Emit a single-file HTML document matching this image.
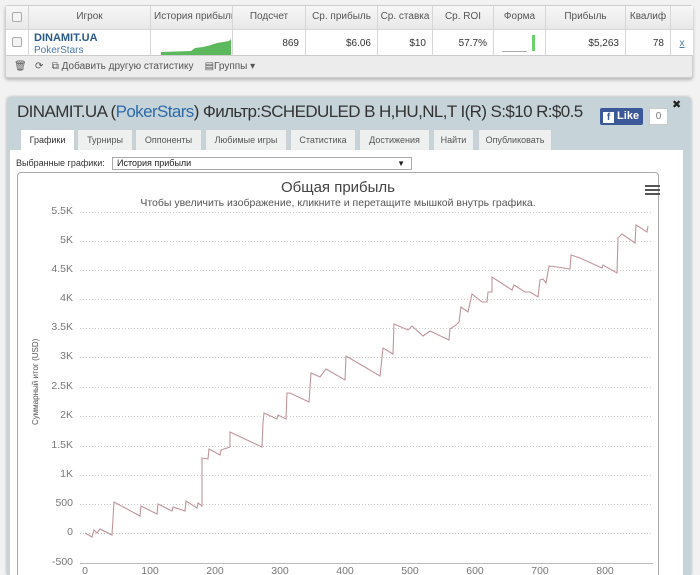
<!DOCTYPE html>
<html><head><meta charset="utf-8"><style>
*{margin:0;padding:0;box-sizing:border-box}
html,body{width:700px;height:575px;overflow:hidden}
body{background:#f2f2f2;position:relative;font-family:"Liberation Sans","DejaVu Sans",sans-serif;color:#333}
.abs{position:absolute}
.top{left:5px;top:5px;width:688px;height:73px;background:#ececec;border:1px solid #cfcfcf;border-radius:3px;box-shadow:0 2px 3px rgba(0,0,0,.25)}
.hc{position:absolute;top:0;height:23px;line-height:22px;font-size:10px;color:#555;text-align:center;border-right:1px solid #d6d6d6;background:linear-gradient(#f7f7f7,#e8e8e8);white-space:nowrap;overflow:hidden}
.dc{position:absolute;top:23px;height:27px;line-height:27px;font-size:10px;color:#333;text-align:right;padding-right:6px;border-right:1px solid #d6d6d6;background:#fff;border-top:1px solid #d6d6d6;border-bottom:1px solid #ccc}
.cb{position:absolute;width:10px;height:10px;border:1px solid #aaa;background:#f4f4f4;border-radius:2px}
.tab{position:absolute;top:129px;height:21px;line-height:20px;font-size:9px;color:#555;text-align:center;background:#eef0f0;border:1px solid #c9cfd2;border-bottom:none}
.yl{position:absolute;left:40px;width:33px;text-align:right;font-size:10.5px;color:#777}
.xl{position:absolute;top:565px;font-size:10.5px;color:#777;width:30px;text-align:center}
</style></head><body>
<div class="abs top">
 <div class="hc" style="left:0;width:23px"></div>
 <div class="hc" style="left:23px;width:122px">Игрок</div>
 <div class="hc" style="left:145px;width:82px;text-align:left;padding-left:3px">История прибыли</div>
 <div class="hc" style="left:227px;width:73px">Подсчет</div>
 <div class="hc" style="left:300px;width:72px">Ср. прибыль</div>
 <div class="hc" style="left:372px;width:55px">Ср. ставка</div>
 <div class="hc" style="left:427px;width:61px">Ср. ROI</div>
 <div class="hc" style="left:488px;width:52px">Форма</div>
 <div class="hc" style="left:540px;width:80px">Прибыль</div>
 <div class="hc" style="left:620px;width:45px">Квалиф</div>
 <div class="hc" style="left:665px;width:22px;border:none"></div>
 <div class="cb" style="left:6px;top:6px"></div>
 <div class="dc" style="left:0;width:23px"></div>
 <div class="dc" style="left:23px;width:122px;text-align:left;padding-left:5px;line-height:12px;padding-top:2px"><b style="color:#2a5a8c;font-size:11px">DINAMIT.UA</b><br><span style="color:#4a78a8">PokerStars</span></div>
 <div class="dc" style="left:145px;width:82px"><svg width="82" height="27" style="position:absolute;left:0;top:0"><polygon points="10,22 40,21 44,18 52,17 60,15 66,13 72,12 78,11 80,9 80,25 10,25" fill="#5cb85c"/></svg></div>
 <div class="dc" style="left:227px;width:73px">869</div>
 <div class="dc" style="left:300px;width:72px">$6.06</div>
 <div class="dc" style="left:372px;width:55px">$10</div>
 <div class="dc" style="left:427px;width:61px">57.7%</div>
 <div class="dc" style="left:488px;width:52px"><div class="abs" style="left:38px;top:5px;width:3px;height:16px;background:#6cd06c"></div><div class="abs" style="left:8px;top:21px;width:25px;height:1px;background:#aaa"></div></div>
 <div class="dc" style="left:540px;width:80px">$5,263</div>
 <div class="dc" style="left:620px;width:45px">78</div>
 <div class="dc" style="left:665px;width:22px;border-right:none;text-align:center;padding:0;color:#4a78a8;text-decoration:underline">x</div>
 <div class="cb" style="left:6px;top:31px"></div>
 <div class="abs" style="left:8px;top:55px;font-size:10px;color:#555;white-space:nowrap">🗑&nbsp;&nbsp;&nbsp;⟳&nbsp;&nbsp;&nbsp;⧉ Добавить другую статистику&nbsp;&nbsp;&nbsp;&nbsp;▤Группы ▾</div>
</div>

<div class="abs" style="left:7px;top:97px;width:684px;height:478px;background:#c6d4da;border-radius:4px 4px 0 0;box-shadow:0 0 3px rgba(0,0,0,.3)"></div>
<div class="abs" style="left:17px;top:102px;font-size:17px;color:#333;white-space:nowrap;letter-spacing:-0.6px">DINAMIT.UA (<span style="color:#2d6aa8">PokerStars</span>) Фильтр:SCHEDULED B H,HU,NL,T I(R) S:$10 R:$0.5</div>
<div class="abs" style="left:600px;top:108px;width:43px;height:17px;background:#3b5998;border-radius:2px;color:#fff;font-size:11px;font-weight:bold;line-height:17px;padding-left:3px"><span style="display:inline-block;width:11px;height:11px;background:#fff;color:#3b5998;font-size:10px;line-height:12px;text-align:center;vertical-align:-1px">f</span> Like</div>
<div class="abs" style="left:649px;top:108px;width:19px;height:17px;background:#fff;border:1px solid #ccc;font-size:10px;color:#777;text-align:center;line-height:15px">0</div>
<div class="abs" style="left:672px;top:98px;font-size:11px;font-weight:bold;color:#222">✖</div>

<div class="abs" style="left:10px;top:150px;width:673px;height:425px;background:#fff"></div>
<div class="tab" style="left:20px;width:55px;background:#fff;color:#333">Графики</div>
<div class="tab" style="left:77px;width:56px">Турниры</div>
<div class="tab" style="left:135px;width:67px">Оппоненты</div>
<div class="tab" style="left:205px;width:82px">Любимые игры</div>
<div class="tab" style="left:290px;width:66px">Статистика</div>
<div class="tab" style="left:359px;width:71px">Достижения</div>
<div class="tab" style="left:433px;width:41px">Найти</div>
<div class="tab" style="left:478px;width:74px">Опубликовать</div>

<div class="abs" style="left:16px;top:158px;font-size:9px;color:#333">Выбранные графики:</div>
<div class="abs" style="left:112px;top:157px;width:300px;height:13px;border:1px solid #aaa;font-size:9px;line-height:11px;padding-left:4px;color:#222">История прибыли<span style="position:absolute;right:6px;font-size:8px">▼</span></div>

<div class="abs" style="left:17px;top:172px;width:642px;height:410px;border:1px solid #aaa;border-radius:4px;background:#fff"></div>
<div class="abs" style="left:17px;top:179px;width:642px;text-align:center;font-size:15px;color:#444">Общая прибыль</div>
<div class="abs" style="left:17px;top:197px;width:642px;text-align:center;font-size:10.5px;color:#555">Чтобы увеличить изображение, кликните и перетащите мышкой внутрь графика.</div>
<div class="abs" style="left:645px;top:185px;width:15px"><div style="height:2px;background:#555;margin-bottom:2px"></div><div style="height:2px;background:#555;margin-bottom:2px"></div><div style="height:2px;background:#555"></div></div>
<div class="abs" style="transform:rotate(-90deg);transform-origin:0 0;font-size:8px;color:#555;white-space:nowrap;left:31px;top:425px">Суммарный итог (USD)</div>

<div class="yl" style="top:205px">5.5K</div>
<div class="yl" style="top:234px">5K</div>
<div class="yl" style="top:263px">4.5K</div>
<div class="yl" style="top:292px">4K</div>
<div class="yl" style="top:321px">3.5K</div>
<div class="yl" style="top:350px">3K</div>
<div class="yl" style="top:380px">2.5K</div>
<div class="yl" style="top:409px">2K</div>
<div class="yl" style="top:439px">1.5K</div>
<div class="yl" style="top:468px">1K</div>
<div class="yl" style="top:497px">500</div>
<div class="yl" style="top:526px">0</div>
<div class="yl" style="top:556px">-500</div>
<div class="xl" style="left:70px">0</div>
<div class="xl" style="left:135px">100</div>
<div class="xl" style="left:200px">200</div>
<div class="xl" style="left:265px">300</div>
<div class="xl" style="left:330px">400</div>
<div class="xl" style="left:395px">500</div>
<div class="xl" style="left:460px">600</div>
<div class="xl" style="left:525px">700</div>
<div class="xl" style="left:590px">800</div>

<svg class="abs" style="left:0;top:0" width="700" height="575">
<g stroke="#ccc" stroke-dasharray="1,2" stroke-width="1">
<line x1="80" x2="653" y1="212.5" y2="212.5"/><line x1="80" x2="653" y1="241.5" y2="241.5"/><line x1="80" x2="653" y1="270.5" y2="270.5"/><line x1="80" x2="653" y1="299.5" y2="299.5"/><line x1="80" x2="653" y1="328.5" y2="328.5"/><line x1="80" x2="653" y1="357.5" y2="357.5"/><line x1="80" x2="653" y1="387.5" y2="387.5"/><line x1="80" x2="653" y1="416.5" y2="416.5"/><line x1="80" x2="653" y1="446.5" y2="446.5"/><line x1="80" x2="653" y1="475.5" y2="475.5"/><line x1="80" x2="653" y1="504.5" y2="504.5"/><line x1="80" x2="653" y1="533.5" y2="533.5"/>
</g>
<line x1="80" x2="653" y1="563.5" y2="563.5" stroke="#bbb"/>
<polyline fill="none" stroke="#c0959a" stroke-width="1.1" points="85,533 92,537 94,530 97,533 100,529 112,535 114,502 140,516 141,506 157,514 158,504 172,511 173,507 185,511 186,501 197,508 198,503 202,506 202,458 208,459 209,449 220,455 221,450 230,447 230,432 262,447 263,423 264,413 277,419 278,415 286,419 287,393 290,393 309,402 311,373 320,377 326,369 345,380 346,356 380,376 383,348 393,354 394,324 408,330 412,326 423,336 430,331 449,340 450,329 456,325 459,322 461,307 468,312 472,294 482,302 487,302 488,292 492,292 492,277 512,290 514,285 525,292 530,292 538,297 540,280 543,279 546,283 549,266 557,267 570,269 571,255 580,258 602,268 603,265 617,273 618,238 622,234 635,243 636,225 647,232 648,226"/>
</svg>
</body></html>
